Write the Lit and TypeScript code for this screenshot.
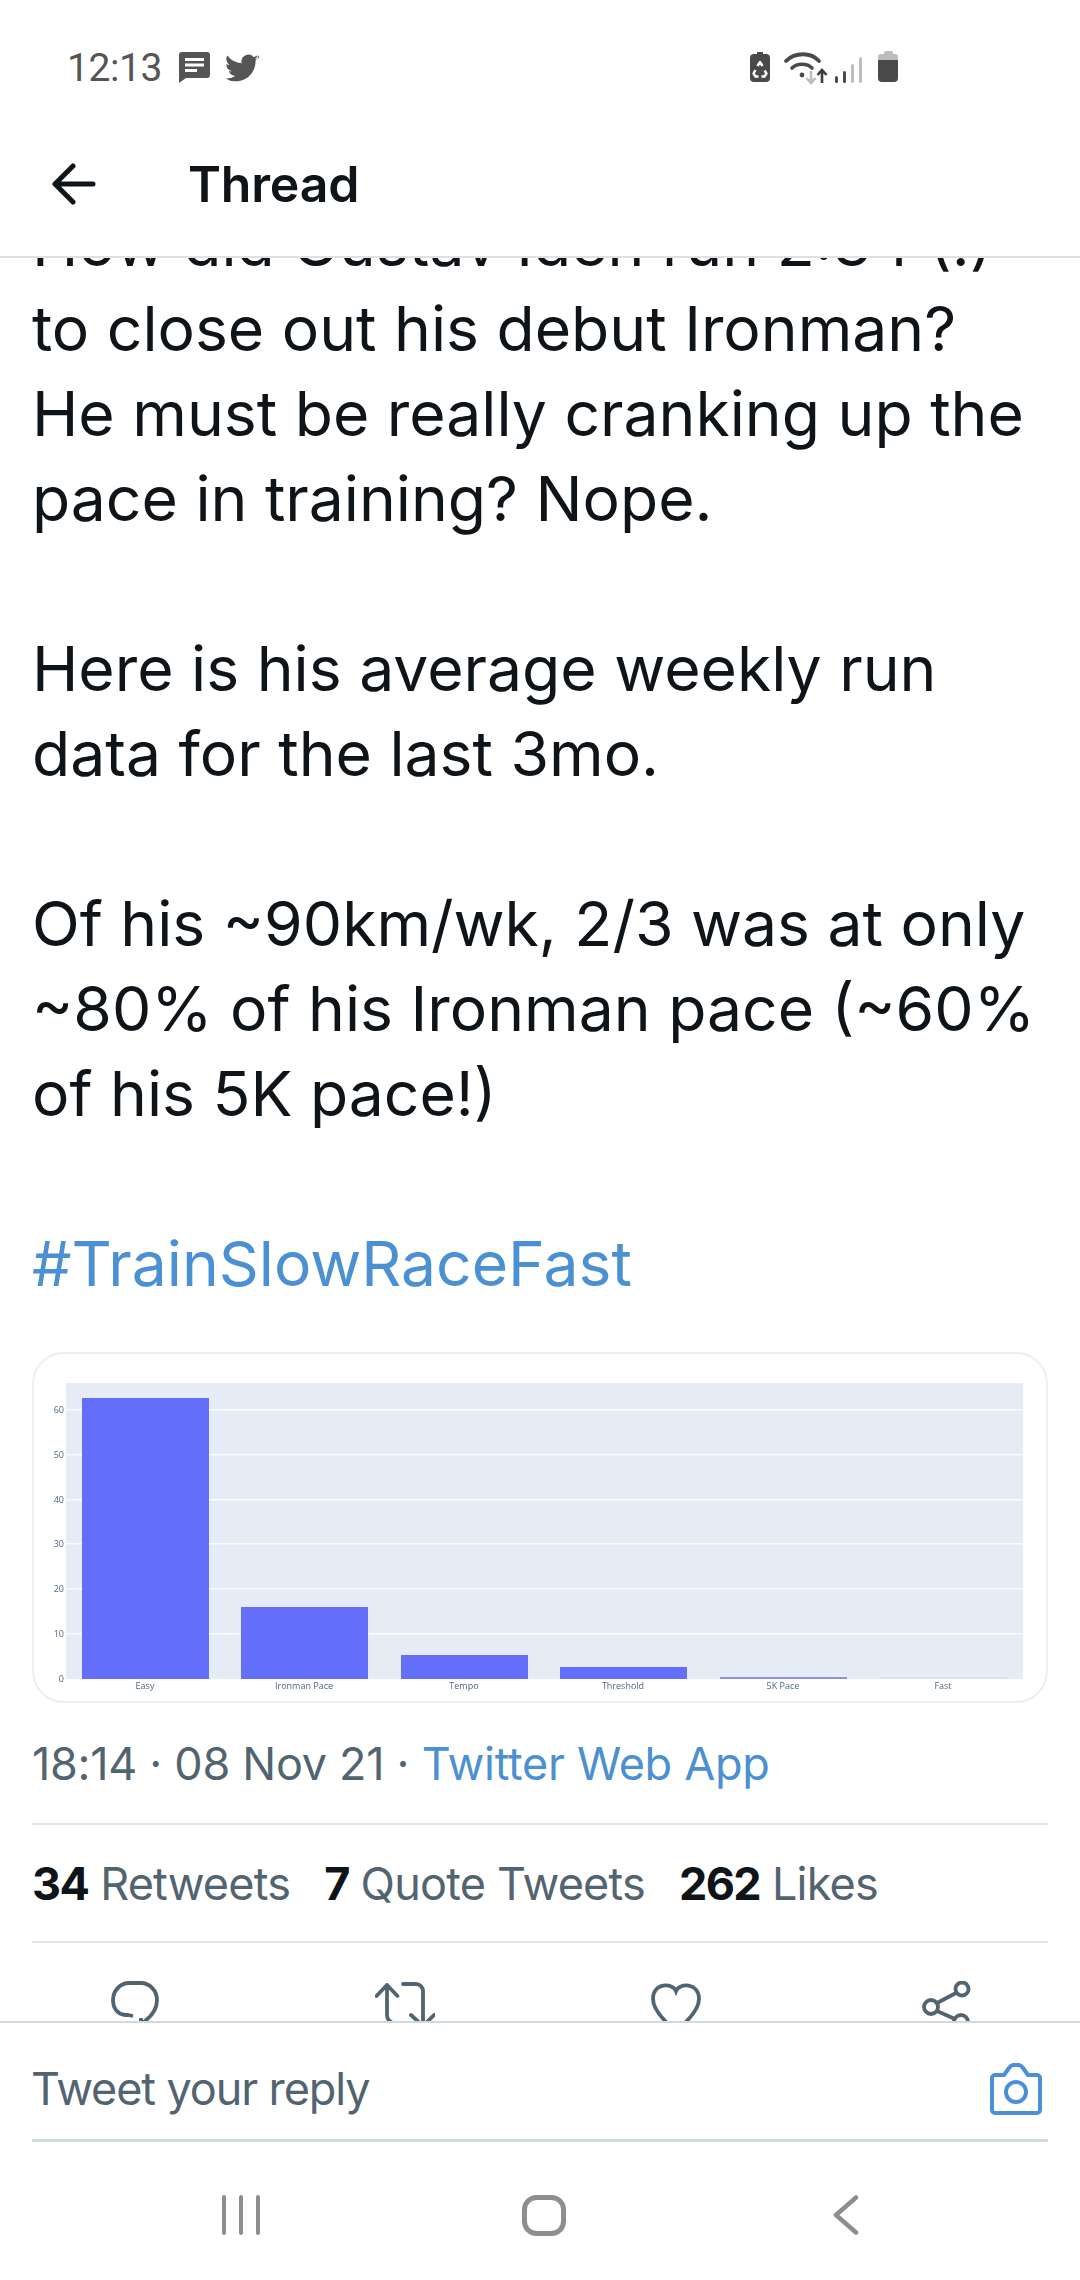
import { LitElement, html, css, svg } from "lit";
import { customElement } from "lit/decorators.js";

const BARS: [string, number, number][] = [
  ["Easy", 82, 1398], ["Ironman Pace", 241, 1607], ["Tempo", 401, 1655],
  ["Threshold", 560, 1667], ["5K Pace", 720, 1677], ["Fast", 880, 1677],
];
const GRID: [string, number][] = [["60", 1410], ["50", 1455], ["40", 1500], ["30", 1544], ["20", 1589], ["10", 1634], ["0", 1679]];
const CH_X = 34, CH_Y = 1354;

@customElement("app-root")
export class AppRoot extends LitElement {
  static styles = css`
    :host { display: block; width: 1080px; height: 2280px; background: #fff; font-family: Inter, "Liberation Sans", sans-serif; color: #0f1419; overflow: hidden; }
    .page { display: flex; flex-direction: column; height: 2280px; }
    .status { flex: none; height: 92px; display: flex; align-items: flex-start; padding: 50px 0 0 67px; box-sizing: border-box; color: #555; }
    .time { font: 400 39px/36px Roboto, sans-serif; width: 112px; letter-spacing: -0.4px; }
    .st-right { margin-left: auto; margin-right: 178px; display: flex; }
    .head { flex: none; height: 166px; box-sizing: border-box; border-bottom: 2px solid #e0e0e0; display: flex; align-items: center; padding: 20px 0 0 52px; }
    .title { margin-left: 92px; font: 600 50px/60px Inter, sans-serif; letter-spacing: -0.2px; }
    .scroll { flex: 1; min-height: 0; overflow: hidden; padding: 0 32px; }
    .tweet { margin-top: -57px; font-size: 62.4px; line-height: 85px; white-space: pre-line; }
    .tag { color: #4a90d2; }
    .card { margin-top: 46px; height: 351px; box-sizing: border-box; border: 2px solid #eceef0; border-radius: 32px; overflow: hidden; }
    .card svg { display: block; filter: blur(0.45px); }
    .meta { margin-top: 31px; height: 91px; box-sizing: border-box; font-size: 45px; line-height: 60px; color: #536471; letter-spacing: -0.3px; border-bottom: 2px solid #dfe3e6; white-space: nowrap; }
    .meta a { color: #4a90d2; }
    .stats { display: flex; gap: 34px; height: 118px; box-sizing: border-box; align-items: center; font-size: 45px; color: #536471; letter-spacing: -0.8px; border-bottom: 2px solid #e3e6e8; white-space: nowrap; }
    .stats b { color: #0f1419; font-weight: 700; letter-spacing: -1.6px; }
    .actions { display: flex; padding-top: 38px; }
    .actions svg { display: block; flex: none; }
    .reply { flex: none; height: 118px; border-top: 2px solid #cfd9de; display: flex; align-items: center; padding: 15px 38px 0 31px; box-sizing: border-box; font-size: 45px; color: #536471; letter-spacing: -1.1px; justify-content: space-between; }
    .rule { flex: none; height: 3px; margin: 0 32px; background: #cfd9de; }
    .nav { flex: none; height: 138px; display: flex; align-items: flex-start; padding-top: 53px; box-sizing: border-box; color: #8e8e8e; }
    .nav svg { display: block; }
  `;

  render() {
    return html`<div class="page">
      <div class="status">
        <span class="time">12:13</span>
        <svg width="31" height="31" viewBox="0 0 31 31" style="margin-top:2px"><path fill="#555" d="M3 0h25a3 3 0 0 1 3 3v20a3 3 0 0 1-3 3H7l-7 5V3a3 3 0 0 1 3-3z"/><path fill="#fff" d="M6 6h19v3H6zM6 11.500h19v3H6zM6 17h12v3H6z"/></svg>
        <svg width="34" height="29" viewBox="0 0 24 20" style="margin:4px 0 0 15px"><path fill="#555" d="M23.950 2.570a9.800 9.800 0 0 1-2.830.77 4.930 4.930 0 0 0 2.170-2.720 9.860 9.860 0 0 1-3.130 1.190 4.920 4.920 0 0 0-8.390 4.490A13.980 13.980 0 0 1 1.640.90a4.930 4.930 0 0 0 1.530 6.570 4.900 4.900 0 0 1-2.230-.62v.06a4.920 4.920 0 0 0 3.950 4.830 4.930 4.930 0 0 1-2.220.08 4.930 4.930 0 0 0 4.600 3.420A9.880 9.880 0 0 1 0 16.810 13.940 13.940 0 0 0 7.550 19c9.060 0 14-7.500 14-14v-.64a10 10 0 0 0 2.400-3.790z"/></svg>
        <div class="st-right">
          <svg width="154" height="36" viewBox="0 0 154 36">
            <path fill="#4a4a4a" d="M6 4h3V2h6v2h3a4 4 0 0 1 4 4v20a4 4 0 0 1-4 4H6a4 4 0 0 1-4-4V8a4 4 0 0 1 4-4z"/>
            <path fill="none" stroke="#fff" stroke-width="2.400" stroke-linejoin="round" d="M9.500 16l2.500-4 2.500 4M7.500 20l-2 3.500 2 3h3M13.500 26.500h3l2-3-2-3"/>
            <path fill="none" stroke="#4a4a4a" stroke-width="3.800" stroke-linecap="round" d="M38 11c9-9 25-9 33 0"/>
            <path fill="none" stroke="#4a4a4a" stroke-width="3.600" stroke-linecap="round" d="M44 18c5-5 15-5 20 0"/>
            <circle cx="54" cy="25" r="2.400" fill="#4a4a4a"/>
            <path fill="none" stroke="#bdbdbd" stroke-width="2.600" d="M63 21v12M58.500 28l4.500 5 4.500-5"/>
            <path fill="none" stroke="#3c3c3c" stroke-width="2.600" d="M74 33V20M69.500 25l4.500-5 4.500 5"/>
            <rect x="87" y="26" width="3" height="7" rx="1.500" fill="#4a4a4a"/><rect x="95" y="21" width="3" height="12" rx="1.500" fill="#4a4a4a"/>
            <rect x="103" y="14" width="3" height="19" rx="1.500" fill="#bdbdbd"/><rect x="111" y="7" width="3" height="26" rx="1.500" fill="#bdbdbd"/>
            <path fill="#bdbdbd" d="M136 4V3a2 2 0 0 1 2-2h5a2 2 0 0 1 2 2v1h2a3 3 0 0 1 3 3v4h-20V7a3 3 0 0 1 3-3z"/>
            <path fill="#4a4a4a" d="M130 10h20v18a4 4 0 0 1-4 4h-12a4 4 0 0 1-4-4z"/>
          </svg>
        </div>
      </div>
      <div class="head">
        <svg width="44" height="42" viewBox="0 0 44 42"><path fill="none" stroke="#0f1419" stroke-width="5" stroke-linecap="round" stroke-linejoin="round" d="M21 3 3 21l18 18M3 21h38"/></svg>
        <span class="title">Thread</span>
      </div>
      <div class="scroll">
        <div class="tweet">How did Gustav Iden run 2:34 (!)
to close out his debut Ironman?
He must be really cranking up the
pace in training? Nope.

Here is his average weekly run
data for the last 3mo.

Of his ~90km/wk, 2/3 was at only
~80% of his Ironman pace (~60%
of his 5K pace!)

<span class="tag">#TrainSlowRaceFast</span></div>
        <div class="card">${this.chart()}</div>
        <div class="meta">18:14 · 08 Nov 21 · <a>Twitter Web App</a></div>
        <div class="stats">
          <span><b>34</b> Retweets</span><span><b>7</b> Quote Tweets</span><span><b>262</b> Likes</span>
        </div>
        <div class="actions">
          ${this.actionIcons()}
        </div>
      </div>
      <div class="reply">
        <span>Tweet your reply</span>
        <svg width="52" height="52" viewBox="0 0 52 52"><path fill="none" stroke="#4a90d9" stroke-width="4" stroke-linejoin="round" d="M2 15a3 3 0 0 1 3-3h9l5-7a6 6 0 0 1 4-3h6a6 6 0 0 1 4 3l5 7h9a3 3 0 0 1 3 3v32a3 3 0 0 1-3 3H5a3 3 0 0 1-3-3z"/><circle cx="26" cy="29" r="10" fill="none" stroke="#4a90d9" stroke-width="4"/></svg>
      </div>
      <div class="rule"></div>
      <div class="nav">
        <svg width="38" height="40" viewBox="0 0 38 40" style="margin-left:222px"><path stroke="currentColor" stroke-width="4" stroke-linecap="round" d="M2 2v36M19 2v36M36 2v36"/></svg>
        <svg width="44" height="41" viewBox="0 0 44 41" style="margin-left:262px"><rect x="2.500" y="2.500" width="39" height="36" rx="12" fill="none" stroke="currentColor" stroke-width="5"/></svg>
        <svg width="26" height="40" viewBox="0 0 26 40" style="margin-left:267px"><path fill="none" stroke="currentColor" stroke-width="4.500" stroke-linecap="round" stroke-linejoin="round" d="M23 2.500 3 20l20 17.500"/></svg>
      </div>
    </div>`;
  }

  chart() {
    return html`<svg width="1012" height="347" viewBox="0 0 1012 347">
      <rect x="${66 - CH_X}" y="${1383 - CH_Y}" width="957" height="296" fill="#E5ECF6"/>
      ${GRID.slice(0, 6).map(([, y]) => svg`<rect x="${66 - CH_X}" y="${y - CH_Y - 1}" width="957" height="1.500" fill="#fff" fill-opacity="0.85"/>`)}
      ${GRID.map(([t, y]) => svg`<text x="${64 - CH_X}" y="${y - CH_Y + 3}" text-anchor="end" font-family="Open Sans" font-size="9" fill="#506784">${t}</text>`)}
      ${BARS.map(([l, x, top], i) => svg`
        <rect x="${x - CH_X}" y="${top - CH_Y}" width="127" height="${1679 - top}" fill="${i === 5 ? "#dde1f1" : i === 4 ? "#8b93dd" : "#636EFA"}"/>
        <text x="${x + 63 - CH_X}" y="${1689 - CH_Y}" text-anchor="middle" font-family="Open Sans" font-size="9" fill="#506784">${l}</text>`)}
    </svg>`;
  }

  actionIcons() {
    const s = "#536471";
    const place = (w: number, ml: number, inner: unknown) => html`<svg width="${w}" height="41" viewBox="0 0 ${w} 41" style="margin-left:${ml}px">${inner}</svg>`;
    return html`
      ${place(48, 79, svg`<path fill="none" stroke="${s}" stroke-width="3.800" stroke-linejoin="round" d="M18 2h12c9 0 16 8 16 17 0 8-4 15-12 21l-4 3v-6M18 2C9 2 2 10 2 19c0 9 5 14 12 15h3l5 1"/>`)}
      ${place(60, 216, svg`<path fill="none" stroke="${s}" stroke-width="3.800" stroke-linecap="round" stroke-linejoin="round" d="M1.500 15 12 4l10.500 11M12 4v30a8 8 0 0 0 4 7M28 3h13a7 7 0 0 1 7 7v30M36 34l12 11 11-11"/>`)}
      ${place(50, 216, svg`<path fill="none" stroke="${s}" stroke-width="3.800" d="M25 10c3-8 23-9 23 8 0 10-11 22-23 32C13 40 2 28 2 18 2 1 22 2 25 10z"/>`)}
      ${place(52, 221, svg`<g fill="none" stroke="${s}" stroke-width="3.800"><circle cx="40" cy="8" r="6.500"/><circle cx="9" cy="26" r="7"/><circle cx="39" cy="41" r="7"/><path d="m15 22 19-10M15 30l18 8"/></g>`)}
    `;
  }
}
